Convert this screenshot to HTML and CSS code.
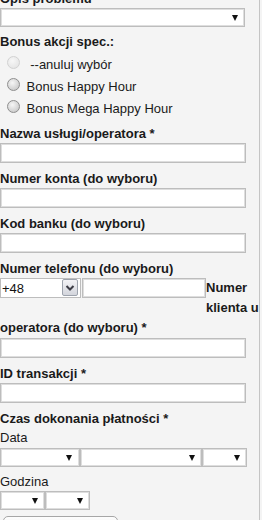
FILE: index.html
```html
<!DOCTYPE html>
<html lang="pl">
<head>
    <meta charset="UTF-8" />
    <meta name="viewport" content="width=device-width, initial-scale=1" />
    <title>Zgłoszenie reklamacji</title>
    <link rel="stylesheet" href="styles.css">
</head>
<body>
    <div class="wrapper">
        <form class="complaint-form">
            <label class="field-label">Opis problemu</label>
            <span class="select-box select-wide"><select></select></span>

            <div class="field-label">Bonus akcji spec.:</div>
            <div class="radio-list">
                <label class="radio-row"><input type="radio" name="bonus" disabled /> &nbsp;--anuluj wybór</label>
                <label class="radio-row"><input type="radio" name="bonus" /> Bonus Happy Hour</label>
                <label class="radio-row"><input type="radio" name="bonus" /> Bonus Mega Happy Hour</label>
            </div>

            <label class="field-label">Nazwa usługi/operatora *</label>
            <input type="text" class="text-input" />

            <label class="field-label">Numer konta (do wyboru)</label>
            <input type="text" class="text-input" />

            <label class="field-label">Kod banku (do wyboru)</label>
            <input type="text" class="text-input" />

            <label class="field-label">Numer telefonu (do wyboru)</label>
            <div class="phone-field">
                <span class="phone-code">
                    <select><option>+48</option></select>
                    <span class="drop-btn">
                        <svg width="14" height="14" viewBox="0 0 14 14"><polyline points="3.5,5 7,8.5 10.5,5" fill="none" stroke="#3c3c46" stroke-width="2"/></svg>
                    </span>
                </span>
                <input type="text" class="phone-number" />
            </div>
            <label class="field-label wrap-label">Numer klienta u operatora (do wyboru) *</label>
            <input type="text" class="text-input" />

            <label class="field-label">ID transakcji *</label>
            <input type="text" class="text-input" />

            <div class="field-label section-label">Czas dokonania płatności *</div>
            <label class="field-label plain">Data</label>
            <div class="select-row date-row">
                <span class="select-box day"><select></select></span>
                <span class="select-box month"><select></select></span>
                <span class="select-box year"><select></select></span>
            </div>
            <label class="field-label plain">Godzina</label>
            <div class="select-row hour-row">
                <span class="select-box hour"><select></select></span>
                <span class="select-box minute"><select></select></span>
            </div>

            <button type="submit" class="send-button">Wyślij zgłoszenie</button>
        </form>
    </div>
</body>
</html>
```

FILE: styles.css
```css
body {
    margin: 0;
    background-color: #f4f4f4;
    font-family: "Liberation Sans", Arial, sans-serif;
    font-size: 13px;
    color: #1a1a1a;
}

.wrapper {
    width: 259px;
    min-height: 100vh;
    border-right: 1px solid #c4c4c4;
    overflow: hidden;
}

.complaint-form {
    margin-top: -9px;
}

/* Labels */
.field-label {
    display: block;
    font-weight: bold;
    line-height: 16px;
    margin-bottom: 1px;
}
.field-label.plain {
    font-weight: normal;
}
.section-label {
    margin-bottom: 3px;
}
.section-label + .plain {
    margin-bottom: 2px;
}
.wrap-label {
    line-height: 20px;
    margin-bottom: 0;
}

/* Inputs */
.text-input,
.phone-number {
    display: block;
    box-sizing: border-box;
    width: 246px;
    height: 20px;
    margin: 0 0 8px;
    padding: 0 3px;
    border: 1px solid #bdbdbd;
    box-shadow: inset 0 0 0 1px #dedede;
    background: #fff;
    font: inherit;
    outline: none;
}

/* Selects */
.select-box {
    position: relative;
    display: block;
}
.select-box select {
    display: block;
    box-sizing: border-box;
    width: 100%;
    height: 19px;
    margin: 0;
    border: 1px solid #bdbdbd;
    box-shadow: inset 0 0 0 1px #dedede;
    background: #fff;
    appearance: none;
    -webkit-appearance: none;
    font: inherit;
}
.select-box::after {
    content: "";
    position: absolute;
    right: 7px;
    top: 7px;
    border-left: 3px solid transparent;
    border-right: 3px solid transparent;
    border-top: 6px solid #111;
    pointer-events: none;
}
.select-wide {
    width: 245px;
    margin-bottom: 7px;
}
.select-row {
    display: flex;
}
.date-row {
    margin-bottom: 7px;
}
.hour-row {
    margin-bottom: 6px;
}
.day { width: 80px; }
.month { width: 122px; }
.year { width: 45px; }
.hour,
.minute { width: 45px; }
.day::after { right: 8px; }

/* Radios */
.radio-list {
    margin: 4px 0 6px;
}
.radio-row {
    display: block;
    height: 22px;
    line-height: 22px;
}
.radio-row input {
    appearance: none;
    -webkit-appearance: none;
    width: 13px;
    height: 13px;
    margin: 0 3px 0 7px;
    border: 1px solid #8e8e8e;
    border-radius: 50%;
    background: radial-gradient(circle at 40% 35%, #f6f6f6, #cdcdcd 75%);
    box-sizing: border-box;
}
.radio-row input:disabled {
    border-color: #d2d2d2;
    background: radial-gradient(circle at 40% 35%, #f7f7f7, #e6e6e6 75%);
}

/* Phone number row */
.phone-code {
    position: relative;
    float: left;
    width: 81px;
    height: 20px;
    margin-bottom: 4px;
}
.phone-code select {
    box-sizing: border-box;
    width: 100%;
    height: 20px;
    margin: 0;
    padding: 0 0 0 1px;
    border: 1px solid #bdbdbd;
    background: #fff;
    appearance: none;
    -webkit-appearance: none;
    font: inherit;
    color: #111;
}
.drop-btn {
    position: absolute;
    right: 3px;
    top: 1px;
    box-sizing: border-box;
    width: 16px;
    height: 17px;
    border: 1px solid #9da3ad;
    border-radius: 2px;
    background: linear-gradient(#f3f3f6, #d3d5dc);
    display: flex;
    align-items: center;
    justify-content: center;
}
.phone-number {
    float: left;
    width: 124px;
    margin: 0 0 4px 1px;
}

/* Button */
.send-button {
    display: block;
    width: 115px;
    height: 24px;
    margin-left: 3px;
    border: 1px solid #a6a6a6;
    border-radius: 5px;
    background: linear-gradient(#fdfdfd, #e2e2e2);
    font: inherit;
}
```
